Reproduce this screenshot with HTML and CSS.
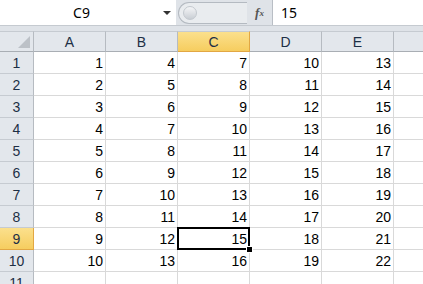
FILE: index.html
```html
<!DOCTYPE html>
<html>
<head>
  <title>Sheet1</title>
  <link rel="stylesheet" href="styles.css">
</head>
<body>
  <div class="formula-bar">
    <div class="name-box">
      <span class="name">C9</span>
      <span class="drop"></span>
    </div>
    <div class="splitter">
      <span class="knob"></span>
    </div>
    <div class="fx"><i>f</i><sub>x</sub></div>
    <div class="formula">15</div>
  </div>
  <div class="spacer"></div>

  <table class="sheet">
    <colgroup>
      <col class="c-head">
      <col class="c-cell"><col class="c-cell"><col class="c-cell"><col class="c-cell"><col class="c-cell">
      <col class="c-rest">
    </colgroup>
    <tr class="col-heads">
      <th class="corner"><span class="tri"></span></th>
      <th>A</th><th>B</th><th class="sel">C</th><th>D</th><th>E</th><th class="rest"></th>
    </tr>
    <tr><th>1</th><td>1</td><td>4</td><td>7</td><td>10</td><td>13</td><td></td></tr>
    <tr><th>2</th><td>2</td><td>5</td><td>8</td><td>11</td><td>14</td><td></td></tr>
    <tr><th>3</th><td>3</td><td>6</td><td>9</td><td>12</td><td>15</td><td></td></tr>
    <tr><th>4</th><td>4</td><td>7</td><td>10</td><td>13</td><td>16</td><td></td></tr>
    <tr><th>5</th><td>5</td><td>8</td><td>11</td><td>14</td><td>17</td><td></td></tr>
    <tr><th>6</th><td>6</td><td>9</td><td>12</td><td>15</td><td>18</td><td></td></tr>
    <tr><th>7</th><td>7</td><td>10</td><td>13</td><td>16</td><td>19</td><td></td></tr>
    <tr><th>8</th><td>8</td><td>11</td><td>14</td><td>17</td><td>20</td><td></td></tr>
    <tr><th class="sel">9</th><td>9</td><td>12</td><td class="active">15</td><td>18</td><td>21</td><td></td></tr>
    <tr><th>10</th><td>10</td><td>13</td><td>16</td><td>19</td><td>22</td><td></td></tr>
    <tr><th>11</th><td></td><td></td><td></td><td></td><td></td><td></td></tr>
  </table>
</body>
</html>
```

FILE: styles.css
```css
html, body {
  margin: 0;
  padding: 0;
  overflow: hidden;
  background-color: #fff;
}

body {
  font-family: "Liberation Sans", Arial, sans-serif;
  width: 423px;
  height: 284px;
}

/* formula bar */
.formula-bar {
  display: flex;
  height: 25px;
  border-bottom: 1px solid #c5cad0;
  background-color: #dfe3e8;
}

.name-box {
  width: 176px;
  background-color: #fff;
  display: flex;
  align-items: center;
}

.name-box .name {
  flex: 1;
  text-align: center;
  font-family: "Noto Sans", sans-serif;
  font-size: 14px;
  color: #000;
}

.name-box .drop {
  width: 0;
  height: 0;
  border-left: 4px solid transparent;
  border-right: 4px solid transparent;
  border-top: 4px solid #333;
  margin-right: 5px;
}

.splitter {
  width: 68px;
  margin: 2px 0 1px 2px;
  border: 1px solid #b4bac1;
  border-right: none;
  border-radius: 11px 0 0 11px;
  background-color: #e9ecef;
  display: flex;
  align-items: center;
}

.splitter .knob {
  width: 12px;
  height: 12px;
  margin-left: 4px;
  border-radius: 50%;
  background: linear-gradient(#f4f5f7, #c9ced4);
  border: 1px solid #c3c8ce;
}

.fx {
  width: 25px;
  display: flex;
  align-items: center;
  justify-content: center;
  font-family: "Liberation Serif", serif;
  font-size: 13px;
  color: #555;
  border-right: 1px solid #b9bec5;
}

.fx i {
  font-weight: bold;
}

.fx sub {
  font-size: 9px;
  font-style: italic;
  font-weight: bold;
  vertical-align: -1px;
}

.formula {
  flex: 1;
  background-color: #fff;
  font-family: "Noto Sans", sans-serif;
  font-size: 14px;
  line-height: 25px;
  padding-left: 8px;
}

.spacer {
  height: 5px;
  background-color: #dfe3e8;
}

/* grid */
.sheet {
  width: 435px;
  border-collapse: separate;
  border-spacing: 0;
  table-layout: fixed;
  font-size: 14px;
}

.sheet col.c-head {
  width: 34px;
}

.sheet col.c-cell {
  width: 72px;
}

.sheet col.c-rest {
  width: 41px;
}

.sheet th {
  background-color: #e3e7ec;
  color: #1d2f45;
  font-weight: normal;
  height: 21px;
  padding: 0;
  border-right: 1px solid #b6bbc1;
  border-bottom: 1px solid #c6cbd1;
  text-align: center;
}

.sheet .col-heads th {
  height: 19px;
  border-top: 1px solid #c6cbd1;
  border-bottom: 1px solid #a9aeb4;
}

.sheet .col-heads th.corner {
  position: relative;
}

.corner .tri {
  position: absolute;
  right: 3px;
  bottom: 3px;
  width: 0;
  height: 0;
  border-left: 12px solid transparent;
  border-bottom: 12px solid #bcc1c7;
}

.sheet .col-heads th.rest {
  border-right: none;
}

.sheet th.sel {
  background: linear-gradient(#fbe08d, #f6cd5f);
  border-right-color: #e2a743;
  border-bottom-color: #e2a743;
}

.sheet td {
  height: 21px;
  padding: 0 2px;
  border-right: 1px solid #d9d9d9;
  border-bottom: 1px solid #d9d9d9;
  text-align: right;
  color: #000;
}

.sheet td.active {
  position: relative;
}

.sheet td.active::after {
  content: "";
  position: absolute;
  left: -1px;
  top: -1px;
  right: -1px;
  bottom: -1px;
  border: 2px solid #000;
}

.sheet td.active::before {
  content: "";
  position: absolute;
  right: -4px;
  bottom: -4px;
  width: 5px;
  height: 5px;
  background-color: #000;
  border: 1px solid #fff;
  z-index: 1;
}
```
